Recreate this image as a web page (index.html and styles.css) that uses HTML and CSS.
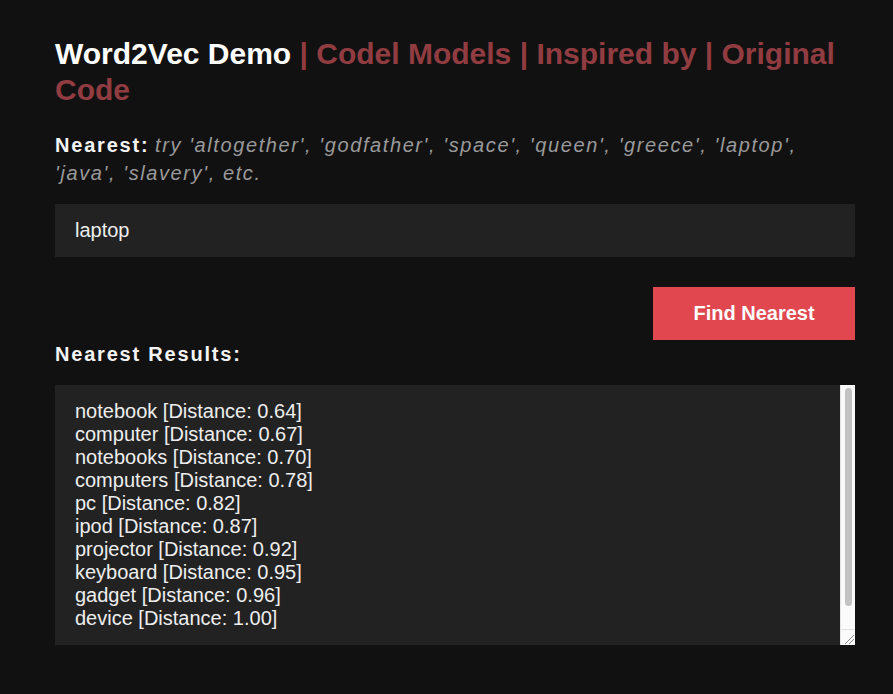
FILE: index.html
```html
<!DOCTYPE html>
<html lang="en">
<head>
<meta charset="utf-8">
<title>Word2Vec Demo</title>
<link rel="stylesheet" href="styles.css">
</head>
<body>
<main class="page">
  <h1 class="title"><span class="brand">Word2Vec Demo</span> <span class="links">| <a href="#">Codel Models</a> | <a href="#">Inspired by</a> | <a href="#">Original Code</a></span></h1>
  <p class="label"><strong>Nearest:</strong> <em class="hint">try 'altogether', 'godfather', 'space', 'queen', 'greece', 'laptop', 'java', 'slavery', etc.</em></p>
  <input class="word" type="text" value="laptop">
  <div class="actions">
    <button class="find" type="button">Find Nearest</button>
  </div>
  <p class="label results-label"><strong>Nearest Results:</strong></p>
  <div class="results-box">
    <textarea class="results" readonly>
notebook [Distance: 0.64]
computer [Distance: 0.67]
notebooks [Distance: 0.70]
computers [Distance: 0.78]
pc [Distance: 0.82]
ipod [Distance: 0.87]
projector [Distance: 0.92]
keyboard [Distance: 0.95]
gadget [Distance: 0.96]
device [Distance: 1.00]
</textarea>
    <div class="scrollbar" aria-hidden="true">
      <div class="thumb"></div>
      <div class="track-rest"></div>
      <div class="corner">
        <svg width="14" height="14" viewBox="0 0 14 14"><path d="M13 4 L4 13 M13 8 L8 13" stroke="#8a8a8a" stroke-width="1" fill="none"/></svg>
      </div>
    </div>
  </div>
</main>
</body>
</html>
```

FILE: styles.css
```css
html, body {
  margin: 0;
  padding: 0;
  background: #111111;
}

body {
  font-family: "Liberation Sans", Arial, Helvetica, sans-serif;
  color: #ffffff;
}

.page {
  width: 800px;
  margin: 0 0 0 55px;
  padding-top: 36px;
  display: flex;
  flex-direction: column;
}

.title {
  margin: 0;
  font-size: 30px;
  line-height: 36px;
  font-weight: bold;
}

.brand {
  color: #ffffff;
}

.links,
.links a {
  color: #913c41;
  text-decoration: none;
}

.label {
  margin: 23px 0 0;
  font-size: 20px;
  line-height: 28px;
  color: #f4f4f4;
}

.label strong {
  font-weight: bold;
  letter-spacing: 1.8px;
}

.hint {
  color: #9a9a9a;
  font-style: italic;
  letter-spacing: 1.6px;
}

.word {
  margin-top: 17px;
  box-sizing: border-box;
  width: 800px;
  height: 53px;
  padding: 0 20px;
  border: none;
  outline: none;
  background: #222222;
  color: #eeeeee;
  font-family: "Liberation Sans", Arial, Helvetica, sans-serif;
  font-size: 20px;
}

.actions {
  display: flex;
  justify-content: flex-end;
  margin-top: 30px;
}

.find {
  width: 202px;
  height: 53px;
  border: none;
  border-radius: 0;
  background: #e0474f;
  color: #ffffff;
  font-family: "Liberation Sans", Arial, Helvetica, sans-serif;
  font-size: 20px;
  font-weight: bold;
  cursor: pointer;
}

.results-label {
  margin: 0;
}

.results-box {
  margin-top: 17px;
  display: flex;
  height: 260px;
  width: 800px;
}

.results {
  flex: 1;
  box-sizing: border-box;
  height: 260px;
  padding: 15px 20px;
  border: none;
  outline: none;
  background: #222222;
  color: #eeeeee;
  font-family: "Liberation Sans", Arial, Helvetica, sans-serif;
  font-size: 20px;
  line-height: 23px;
  resize: none;
  overflow: hidden;
}

.scrollbar {
  box-sizing: border-box;
  width: 15px;
  height: 260px;
  background: #fafafa;
  border-left: 1px solid #e4e4e4;
  display: flex;
  flex-direction: column;
  padding: 3px 3px 0 3px;
}

.thumb {
  width: 7px;
  height: 218px;
  margin-left: 1px;
  border-radius: 4px;
  background: #c2c2c2;
}

.track-rest {
  flex: 1;
  border-bottom: 1px solid #e2e2e2;
  margin: 0 -3px;
}

.corner {
  height: 15px;
  margin: 0 -3px;
  display: flex;
  align-items: flex-end;
  justify-content: flex-end;
}

.corner svg {
  display: block;
}
```
